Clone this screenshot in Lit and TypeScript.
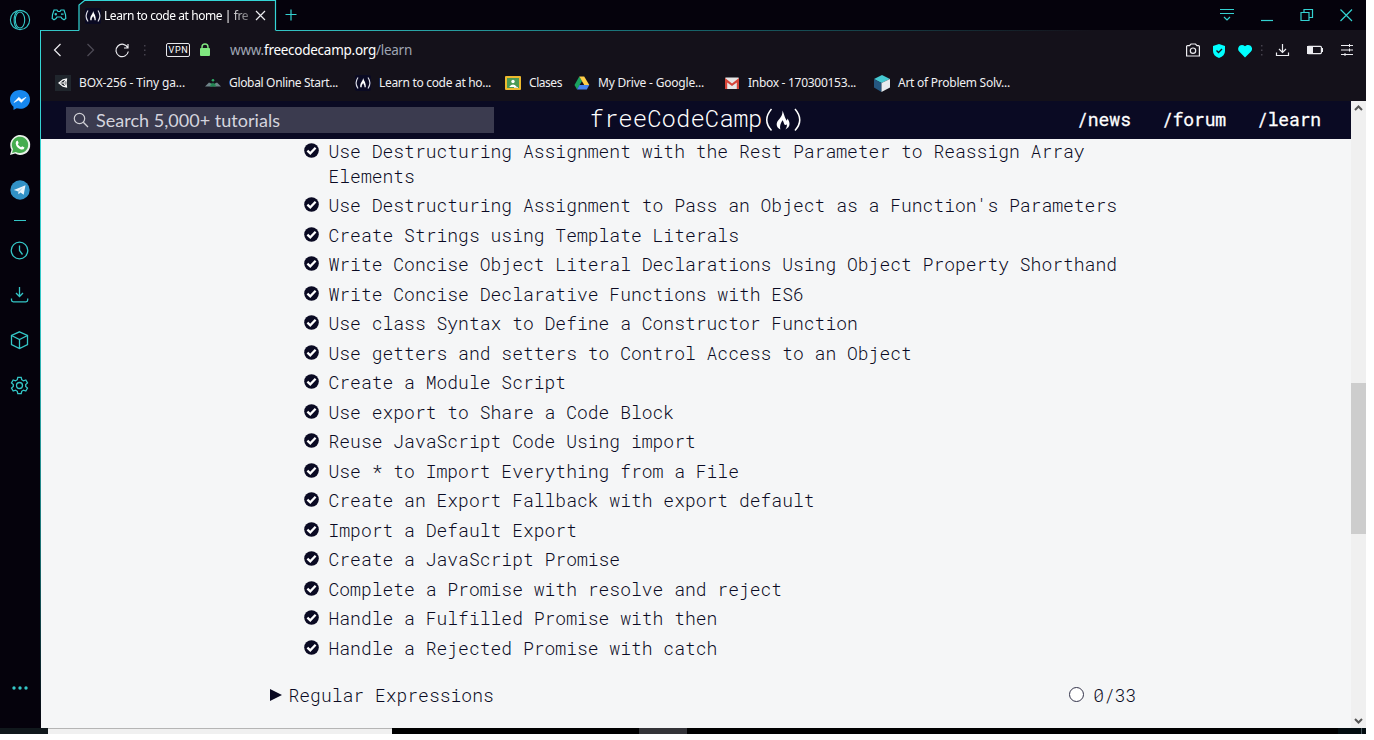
import { LitElement, html, css, svg } from "lit";
import { customElement } from "lit/decorators.js";

const flame = svg`<path d="M8.300 0C9.800 3 10 5.500 11.500 8.300C12 9.800 12.600 9.300 12.700 7.500C15.300 11 15.500 15.500 11 17.500C12.300 15.500 12.500 14 12 12.800C11.300 13.800 10.200 13.500 9.800 12.300C9.400 11 9.300 10 8.300 9C7.500 11.300 5.700 13.300 6.600 17.500C2.500 15.500 2.800 11.500 4.800 9C6.800 6.500 8.900 3.800 8.300 0Z" fill="#fff"/>`;

const campIcon = html`<svg width="16" height="16" viewBox="0 0 16 16"><rect width="16" height="16" rx="2" fill="#0a0a23"/><path d="M3 2.500Q-.8 8 3 13.500M13 2.500Q16.800 8 13 13.500" fill="none" stroke="#dcdce4" stroke-width="1.200"/><path d="M8.300 3C8.600 5.500 11 7 10.800 12.300H9.500C9.800 10 8.300 9.500 8.300 8C7.600 9 6.400 10 6.700 12.300H5.300C4.600 8.500 7.500 6.500 8.300 3Z" fill="#fff"/></svg>`;

const bookmarkIcons = [
  html`<svg width="16" height="16" viewBox="0 0 16 16"><rect width="16" height="16" fill="#20262d"/><path d="M4 8L8 4.800 11.500 4 11 8 11.500 12 8 11.200Z" fill="none" stroke="#fff" stroke-width="1.200"/><path d="M5 8H8.800M8.800 8L11 4.500M8.800 8L11 11.500" fill="none" stroke="#fff" stroke-width="1.100"/></svg>`,
  html`<svg width="16" height="16" viewBox="0 0 16 16"><path d="M0 11.500L4 7.500 6 8.500 8 11.500ZM8 11.500L10 8.500 12 7.500 16 11.500Z" fill="#70858a"/><path d="M4.500 11.500L8 7.500 11.500 11.500Z" fill="#218451"/><circle cx="8" cy="5.300" r="1.300" fill="#2da663"/><path d="M5.500 9H7M9.500 9H11" stroke="#2da663"/></svg>`,
  campIcon,
  html`<svg width="16" height="16" viewBox="0 0 16 16"><rect y="1" width="16" height="14" rx="1" fill="#edb92e"/><rect x="2" y="3" width="12" height="10" fill="#4b9a55"/><circle cx="8" cy="6.500" r="1.700" fill="#fff"/><path d="M4.500 11.500Q8 7.500 11.500 11.500V12H4.500Z" fill="#fff"/><path d="M9 13H13V12H9Z" fill="#ddd"/></svg>`,
  html`<svg width="16" height="16" viewBox="0 0 16 16"><path d="M5.300 1.500L8 6 3 14.500.5 10Z" fill="#1aa260"/><path d="M5.300 1.500H10.200L15.300 10H10.200Z" fill="#ffcf48"/><path d="M3 14.500L5.500 10H15.300L12.800 14.500Z" fill="#4583ee"/></svg>`,
  html`<svg width="16" height="16" viewBox="0 0 16 16"><rect x="1" y="2.500" width="14" height="11.500" rx="1" fill="#e6e6e6"/><path d="M1 14V3L8 8.500 15 3V14H12.800V7.500L8 11 3.200 7.500V14Z" fill="#d64438"/></svg>`,
  html`<svg width="16" height="17" viewBox="0 0 16 17"><path d="M0 4L8 0 16 4 7.500 8Z" fill="#45c8d1"/><path d="M0 4L7.500 8V17L0 12.500Z" fill="#245780"/><path d="M7.500 8L16 4V12.500L7.500 17Z" fill="#e8ecee"/></svg>`,
];

const bookmarks = [
  { text: "BOX-256 - Tiny ga...", w: 106, span: 150 },
  { text: "Global Online Start...", w: 109, span: 150 },
  { text: "Learn to code at ho...", w: 112, span: 150 },
  { text: "Clases", w: 33, span: 69 },
  { text: "My Drive - Google...", w: 106, span: 150 },
  { text: "Inbox - 170300153...", w: 108, span: 150 },
  { text: "Art of Problem Solv...", w: 112, span: 150 },
];

const lessons = [
  "Use Destructuring Assignment with the Rest Parameter to Reassign Array Elements",
  "Use Destructuring Assignment to Pass an Object as a Function's Parameters",
  "Create Strings using Template Literals",
  "Write Concise Object Literal Declarations Using Object Property Shorthand",
  "Write Concise Declarative Functions with ES6",
  "Use class Syntax to Define a Constructor Function",
  "Use getters and setters to Control Access to an Object",
  "Create a Module Script",
  "Use export to Share a Code Block",
  "Reuse JavaScript Code Using import",
  "Use * to Import Everything from a File",
  "Create an Export Fallback with export default",
  "Import a Default Export",
  "Create a JavaScript Promise",
  "Complete a Promise with resolve and reject",
  "Handle a Fulfilled Promise with then",
  "Handle a Rejected Promise with catch",
];

const check = html`<svg class="check" width="15" height="15" viewBox="0 0 15 15"><circle cx="7.500" cy="7.500" r="7.300" fill="#0a0a23"/><path d="M3.400 7.600L6.300 10.300 11.600 4.800" fill="none" stroke="#fff" stroke-width="2.300"/></svg>`;

/** Adjusts letter spacing so each label fills its allotted width. */
function fitLabels(root: ParentNode) {
  root.querySelectorAll<HTMLElement>("[data-w]").forEach((el) => {
    el.style.letterSpacing = "0px";
    const n = (el.textContent || "").length;
    const diff = Number(el.dataset.w) - el.getBoundingClientRect().width;
    el.style.letterSpacing = `${(diff / n).toFixed(3)}px`;
  });
}

@customElement("side-bar")
class SideBar extends LitElement {
  static styles = css`
    :host { display: flex; flex-direction: column; align-items: center; width: 40px; box-sizing: border-box; padding-top: 9px; background: #05020c; }
    svg { display: block; flex: none; overflow: visible; }
    .line { fill: none; stroke: #34c6c6; stroke-width: 1.300; }
    .opera { margin-bottom: 59px; stroke-width: 1.100; }
    .chat { margin-bottom: 25px; }
    .tele { margin-bottom: 19px; }
    .dash { margin-bottom: 20px; }
    .tool { margin-bottom: 25px; }
    .more { margin-top: 282px; }
  `;
  render() {
    return html`
      <svg class="opera line" width="22" height="22" viewBox="0 0 22 22"><circle cx="11" cy="11" r="9.600"/><ellipse cx="11" cy="11" rx="4.700" ry="8"/><path d="M8.500 2.200C4 5.500 4 16.500 8.500 19.800"/></svg>
      <svg class="chat" width="20" height="20" viewBox="0 0 20 20"><path d="M10 0C4 0 0 4.200 0 9.400 0 12.400 1.300 14.800 3.500 16.700V20L6.700 18.300C14 20.200 20 15.800 20 9.400 20 4 16 0 10 0Z" fill="#1687ee"/><path d="M4 12.500L8.800 7.300 11.500 9.700 16 7.300 11.300 12.500 8.500 10Z" fill="#fff" stroke="#fff" stroke-width=".6"/></svg>
      <svg class="chat" width="20" height="20" viewBox="0 0 20 20"><path d="M0 20L1.500 14.800A10 10 0 1 1 5.200 18.600Z" fill="#eaf2ea"/><path d="M2 18L3.100 14.300A8.200 8.200 0 1 1 5.800 16.900Z" fill="#45ad4f"/><path d="M7.600 5.500L8.700 8 7.700 9.300Q9 11.500 11 12.300L12.200 11.200 14.500 12.400Q14 15 11 14.500 6.500 13 5.700 8.500 5.500 6 7.600 5.500Z" fill="#fff"/></svg>
      <svg class="tele" width="20" height="20" viewBox="0 0 20 20"><circle cx="10" cy="10" r="9.700" fill="#3191c6"/><path d="M3.800 10L15.500 5.300 13.700 14.800 10.400 12.500 8.600 14.300 7.800 11.300Z" fill="#e8f4fb"/><path d="M7.800 11.300L13.300 7.300 9.200 12 8.600 14.300Z" fill="#a6cee3"/></svg>
      <svg class="dash line" width="12" height="2" viewBox="0 0 12 2"><path d="M0 1.500H12" stroke-width="1"/></svg>
      <svg class="tool line" width="20" height="20" viewBox="0 0 20 20"><circle cx="9.500" cy="9.500" r="8.300"/><path d="M9.500 4.500V9.500L12.500 13.500"/></svg>
      <svg class="tool line" width="20" height="20" viewBox="0 0 20 20"><path d="M9.500 1V10M6 7L9.500 10.500 13 7M1.500 12.500V14Q1.500 15.800 3.300 15.800H16Q17.700 15.800 17.700 14V12.500"/></svg>
      <svg class="tool line" width="20" height="20" viewBox="0 0 20 20"><path d="M9.500.8L17.500 4.500V13.500L9.500 17.500 1.500 13.500V4.500ZM1.500 4.500L9.500 8.500 17.500 4.500M9.500 8.500V17.500"/></svg>
      <svg class="line" width="20" height="20" viewBox="0 0 20 20"><g transform="translate(0 -.5)"><path d="M7.800 1.800H11.200L11.700 4.200 13.500 5.300 15.800 4.500 17.500 7.400 15.700 9.100V10.900L17.500 12.600 15.800 15.500 13.500 14.700 11.700 15.800 11.200 18.200H7.800L7.300 15.800 5.500 14.700 3.200 15.500 1.500 12.600 3.300 10.900V9.100L1.500 7.400 3.200 4.500 5.500 5.300 7.300 4.200Z"/><circle cx="9.500" cy="10" r="3"/></g></svg>
      <svg class="more" width="16" height="20" viewBox="0 0 16 20"><g fill="#34c6c6"><circle cx="2" cy="10" r="1.700"/><circle cx="8" cy="10" r="1.700"/><circle cx="14" cy="10" r="1.700"/></g></svg>
    `;
  }
}

@customElement("browser-bars")
class BrowserBars extends LitElement {
  static styles = css`
    :host { display: block; width: 1326px; height: 101px; font: 12px "Segoe UI", "Noto Sans", "Open Sans", sans-serif; color: #f0f0f2; background: #14111a; }
    svg { display: block; flex: none; overflow: visible; }
    .label { white-space: pre; flex: none; }
    .tabs { display: flex; height: 31px; background: #05020c; }
    .lead { display: flex; width: 39px; padding: 9px 0 0 11px; box-sizing: border-box; border-bottom: 1px solid #34c6c6; }
    .tab { display: flex; align-items: center; width: 197px; height: 31px; box-sizing: border-box; padding: 0 0 0 6px; background: #14111a; position: relative; }
    .outline { position: absolute; left: 0; top: 0; }
    .title { margin-left: 3px; width: 144px; overflow: hidden; display: flex; color: #fff; -webkit-mask-image: linear-gradient(90deg, #000 86%, #0006 100%); mask-image: linear-gradient(90deg, #000 86%, #0006 100%); }
    .close { margin-left: 7px; }
    .rest { flex: 1; display: flex; align-items: flex-start; padding: 9px 11.500px 0 8.500px; border-bottom: 1px solid; border-image: linear-gradient(90deg, #34c6c6 0, #176a70 35%, #14111a 75%) 1; }
    .cyan { fill: none; stroke: #34d1d1; stroke-width: 1.200; }
    .spacer { flex: 1; }
    .wincon { margin-left: 20px; }
    .address { display: flex; align-items: center; height: 38px; padding: 0 12px 0 10px; }
    .white { fill: none; stroke: #ececf0; stroke-width: 1.200; }
    .dim { fill: none; stroke: #4d4a55; stroke-width: 1.300; }
    .vpn { box-sizing: border-box; border: 1px solid #e8e8ec; border-radius: 2px; width: 24px; height: 14px; margin: 0 10px 0 15px; font: 9px/12px "Roboto", sans-serif; letter-spacing: 0.700px; text-align: center; color: #fff; text-indent: 1px; }
    .url { display: flex; font-size: 13.500px; margin-left: 20px; color: #9fa5b3; white-space: pre; }
    .domain { color: #fff; }
    .marks { display: flex; align-items: center; height: 31px; padding: 0 0 3px 15px; box-sizing: border-box; }
    .marks .label { margin-top: -1px; }
    .mark { display: flex; align-items: center; gap: 8px; flex: none; }
  `;
  firstUpdated() { fitLabels(this.renderRoot as ParentNode); }
  render() {
    return html`
      <div class="tabs">
        <div class="lead"><svg class="cyan" width="16" height="12" viewBox="0 0 16 12"><path d="M3 1H6L7 2.500H9L10 1H13L14.500 5.500 14.800 9.500 13 10.800 11 9.500 10 8H6L5 9.500 3 10.800 1.200 9.500 1.500 5.500Z"/><path d="M4.800 4V6.500M3.500 5.200H6M10 5.200H12.500"/></svg></div>
        <div class="tab">
          <svg class="outline" width="197" height="31" viewBox="0 0 197 31"><path d="M0 0H6L.5 5V31H0Z" fill="#05020c"/><path d="M0 30.500V5L5.500.5H196.500V30.500" fill="none" stroke="#34d6d6" stroke-width="1.200"/></svg>
          ${campIcon}
          <div class="title"><span class="label" data-w="144">Learn to code at home | fre</span></div>
          <svg class="close white" width="11" height="11" viewBox="0 0 11 11"><path d="M1 1L10 10M10 1L1 10"/></svg>
        </div>
        <div class="rest">
          <svg class="cyan" width="12" height="12" viewBox="0 0 12 12"><path d="M6 .5V11.500M.5 5.500H11.500"/></svg>
          <span class="spacer"></span>
          <svg class="cyan" width="15" height="13" viewBox="0 0 15 13"><path d="M0 .5H14M0 4.500H14M4 8L7 11 10 8"/></svg>
          <svg class="cyan" width="40" height="13" viewBox="0 0 40 13"><path d="M26 11.500H38"/></svg>
          <svg class="cyan" width="40" height="13" viewBox="0 0 40 13"><path d="M26 3.500H34V11.500H26ZM29 3.500V.5H37.500V8.500H34"/></svg>
          <svg class="cyan wincon" width="20" height="13" viewBox="0 0 20 13"><path d="M5.500.5L17 12M17 .5L5.500 12"/></svg>
        </div>
      </div>
      <div class="address">
        <svg class="white" width="16" height="14" viewBox="0 0 16 14"><path d="M10.500 1L4.500 7 10.500 13"/></svg>
        <svg class="dim" width="48" height="14" viewBox="0 0 48 14"><path d="M21.500 1L27.500 7 21.500 13"/></svg>
        <svg class="white" width="16" height="14" viewBox="0 0 16 14"><path d="M14 1V5H10M13.800 4.800A6.200 6.200 0 1 0 14.300 8.500"/></svg>
        <svg width="21" height="14" viewBox="0 0 21 14"><path d="M14 2h1.500v1.500H14zM14 6.500h1.500V8H14zM14 11h1.500v1.500H14z" fill="#45424d"/></svg>
        <span class="vpn">VPN</span>
        <svg width="10" height="14" viewBox="0 0 10 14"><path d="M2 6V4A3 3 0 0 1 8 4V6" fill="none" stroke="#80e880" stroke-width="1.400"/><rect y="5" width="10" height="8" rx="1" fill="#80e880"/></svg>
        <div class="url"><span class="label" data-w="34">www.</span><span class="label domain" data-w="112">freecodecamp.org</span><span class="label" data-w="36">/learn</span></div>
        <span class="spacer"></span>
        <svg class="white" width="26" height="15" viewBox="0 0 26 15"><path d="M.6 3.500Q.6 2.600 1.500 2.600H3.500L5 1H9.500L11 2.600H12.500Q13.400 2.600 13.400 3.500V13H.6Z"/><circle cx="7" cy="7.700" r="2.700"/></svg>
        <svg width="26" height="15" viewBox="0 0 26 15"><path d="M7 1L13 3V8Q13 13 7 15 1 13 1 8V3Z" fill="#0ff"/><path d="M4.500 7.500L6.500 9.500 10 6" fill="none" stroke="#14111a" stroke-width="1.300"/></svg>
        <svg width="22" height="15" viewBox="0 0 22 15"><path d="M7 14.500L1.200 8.500C-2 4.500 3-.5 7 3.300C11-.5 16.500 4.500 13 8.500Z" fill="#0ff"/></svg>
        <svg width="16" height="14" viewBox="0 0 16 14"><path d="M1 2h1.500v1.500H1zM1 6.500h1.500V8H1zM1 11h1.500v1.500H1z" fill="#45424d"/></svg>
        <svg class="white" width="31" height="14" viewBox="0 0 31 14"><path d="M6.500 1V9M3 6L6.500 9.500 10 6M.5 9.500V12.500H12.500V9.500"/></svg>
        <svg width="34" height="10" viewBox="0 0 34 10"><rect x=".6" y="1.300" width="13.800" height="7.300" rx="1" fill="none" stroke="#ececf0" stroke-width="1.200"/><rect y="1" width="6" height="8" fill="#ececf0"/><path d="M15.500 3V7" stroke="#ececf0"/></svg>
        <svg class="white" width="13" height="13" viewBox="0 0 13 13"><path d="M0 1.500H12M0 6H12M0 10.500H12M8.500 0V3M8.500 4.500V7.500M4 9V12" stroke-width="1"/></svg>
      </div>
      <div class="marks">
        ${bookmarks.map((b, i) => html`<div class="mark" style="width:${b.span}px">${bookmarkIcons[i]}<span class="label" data-w=${b.w}>${b.text}</span></div>`)}
      </div>
    `;
  }
}

@customElement("learn-page")
class LearnPage extends LitElement {
  static styles = css`
    :host { display: flex; width: 1325px; height: 627px; background: #f5f6f7; color: #0a0a23; font: 300 18px/25px "Roboto Mono", "Liberation Mono", monospace; }
    svg { display: block; flex: none; overflow: visible; }
    .body { width: 1310px; overflow: hidden; }
    .head { display: flex; align-items: center; height: 38px; box-sizing: border-box; padding: 0 30px 0 25px; background: #0a0a23; color: #fff; }
    .search { display: flex; align-items: center; width: 428px; height: 26px; background: #3b3b4f; box-sizing: border-box; padding-left: 7px; gap: 7px; font: 18px/26px "Lato", sans-serif; color: #d4d4de; }
    .logo { display: flex; align-items: center; margin-left: 95.500px; }
    .name { font-size: 24px; height: 30px; line-height: 26px; }
    .label { white-space: pre; }
    .links { display: flex; margin: -2px 0 0 auto; gap: 31px; font-weight: 400; -webkit-text-stroke: 0.300px #fff; }
    .list { display: flex; flex-direction: column; gap: 4.470px; padding: 0 0 0 263px; width: 827px; }
    .item { display: flex; align-items: flex-start; gap: 9.500px; }
    .check { margin-top: 4px; }
    .block { display: flex; align-items: center; margin: 22.400px 0 0 229px; width: 866.500px; }
    .name2 { margin-left: 6.500px; flex: 1; }
    .ring { margin: -2px 9px 0 0; }
    .track { display: flex; flex-direction: column; width: 15px; background: #f0f0f0; }
    .thumb { height: 151px; background: #cdcdcd; margin: 266px 0 178px; }
  `;
  firstUpdated() { fitLabels(this.renderRoot as ParentNode); }
  render() {
    return html`
      <div class="body">
        <div class="head">
          <div class="search"><svg width="16" height="16" viewBox="0 0 16 16"><circle cx="6.500" cy="6.500" r="5.200" fill="none" stroke="#d0d0d5" stroke-width="1.200"/><path d="M10.300 10.300L15 15" stroke="#d0d0d5" stroke-width="1.300"/></svg><span class="label" data-w="184">Search 5,000+ tutorials</span></div>
          <div class="logo"><span class="name"><span class="label" data-w="173">freeCodeCamp</span></span>
            <svg width="40" height="26" viewBox="0 0 40 26"><path d="M8.500 2Q-1 13 8.500 23.500M32 2Q41.500 13 32 23.500" fill="none" stroke="#fff" stroke-width="1.500"/><g transform="translate(9.800 3.500) scale(1.150 1.080)">${flame}</g></svg></div>
          <div class="links"><span class="label" data-w="54">/news</span><span class="label" data-w="64">/forum</span><span class="label" data-w="64">/learn</span></div>
        </div>
        <div class="list">${lessons.map((t) => html`<div class="item">${check}<span>${t}</span></div>`)}</div>
        <div class="block">
          <svg width="12" height="14" viewBox="0 0 12 14"><path d="M0 1L12 7 0 13Z" fill="#0a0a23"/></svg>
          <span class="name2">Regular Expressions</span>
          <svg class="ring" width="15" height="15" viewBox="0 0 15 15"><circle cx="7.500" cy="7.500" r="7" fill="#fff" stroke="#33334a"/></svg>
          <span>0/33</span>
        </div>
      </div>
      <div class="track">
        <svg width="15" height="16" viewBox="0 0 15 16"><path d="M4 9L7.500 5.500 11 9" fill="none" stroke="#555" stroke-width="2"/></svg>
        <div class="thumb"></div>
        <svg width="15" height="16" viewBox="0 0 15 16"><path d="M4 7L7.500 10.500 11 7" fill="none" stroke="#555" stroke-width="2"/></svg>
      </div>
    `;
  }
}

@customElement("app-root")
class AppRoot extends LitElement {
  static styles = css`
    :host { display: block; width: 1374px; height: 740px; background: #fff; overflow: hidden; }
    .window { display: flex; width: 1366px; height: 728px; }
    .main { width: 1326px; }
    .frame { display: flex; }
    .edge { width: 1px; height: 698px; margin-top: -71px; flex: none; background: linear-gradient(#34d6d6 0, #34c6c6 40%, #1c6f72 75%, #05020c 100%); position: relative; }
    .taskbar { display: flex; width: 1366px; height: 6px; background: #000; }
    .start { width: 48px; background: #10181c; }
    .field { width: 344px; box-sizing: border-box; background: #f0f0f0; border-top: 1px solid #b5b5b5; }
    .active { width: 48px; margin-left: 247px; background: #333338; }
    .tray { width: 23px; margin-left: auto; background: #020c10; border-right: 1px solid #46565c; }
    .corner { width: 4px; background: #020c10; }
  `;
  render() {
    return html`
      <div class="window">
        <side-bar></side-bar>
        <div class="main">
          <browser-bars></browser-bars>
          <div class="frame"><div class="edge"></div><learn-page></learn-page></div>
        </div>
      </div>
      <div class="taskbar"><div class="start"></div><div class="field"></div><div class="active"></div><div class="tray"></div><div class="corner"></div></div>
    `;
  }
}
